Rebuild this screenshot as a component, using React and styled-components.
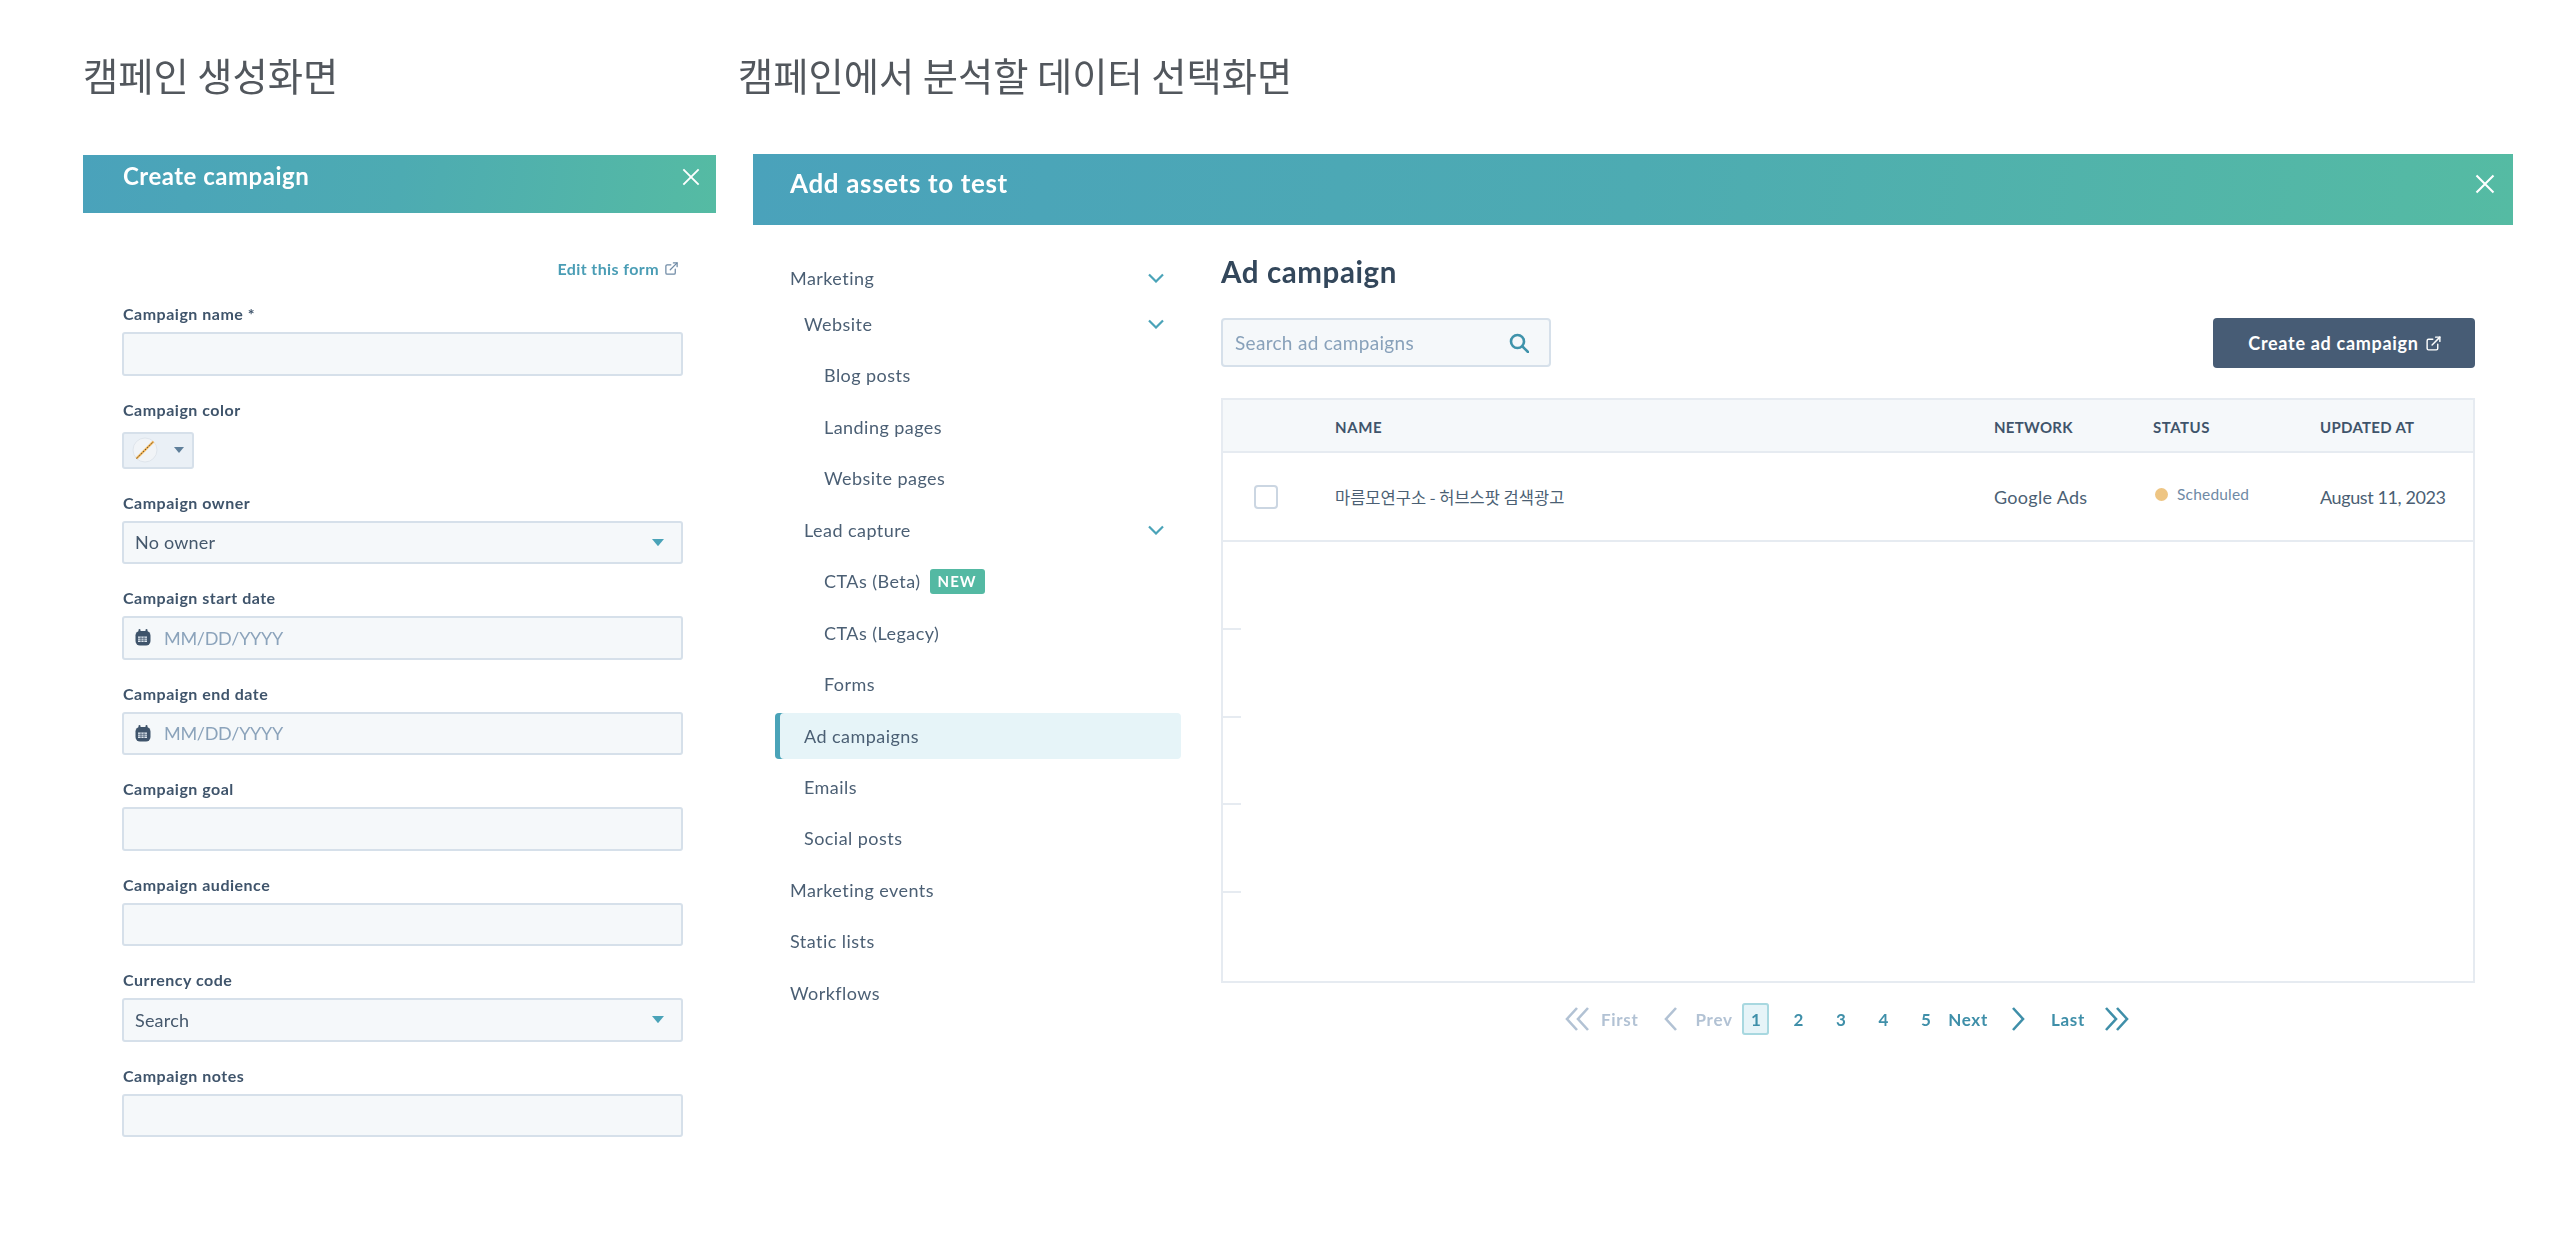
import React from "react";
import styled, { createGlobalStyle } from "styled-components";
import { ExternalLink } from "lucide-react";

const Global = createGlobalStyle`
  html, body { margin: 0; padding: 0; background: #fff; }
  body { font-family: Lato, "Noto Sans CJK KR", sans-serif; color: #33475b; }
  * { box-sizing: border-box; }
`;

const Page = styled.div`
  display: grid;
  grid-template-columns: 633px 1775px;
  column-gap: 22px;
  width: 2560px;
  height: 1233px;
  padding: 50px 0 0 83px;
  overflow: hidden;
  filter: blur(0.4px);
`;
const Column = styled.section`
  display: flex;
  flex-direction: column;
  min-width: 0;
`;
const Heading = styled.h1`
  margin: 0;
  height: ${(p) => p.$h}px;
  font: 400 38.3px/50px "Noto Sans CJK KR", sans-serif;
  color: #52575d;
`;
const Banner = styled.header`
  display: flex;
  justify-content: space-between;
  background: linear-gradient(97deg, #4aa2bb 0%, #4dabb2 50%, #55bba3 100%);
  color: #fff;
  height: ${(p) => p.$h}px;
  padding: ${(p) => p.$pad};
`;
const BannerTitle = styled.h2`
  margin: 0;
  font-weight: 700;
  font-size: ${(p) => p.$size}px;
  line-height: 30px;
  letter-spacing: ${(p) => p.$ls}px;
`;
const CloseButton = styled.span`
  display: block;
  padding-top: ${(p) => p.$top}px;
`;
const CloseIcon = ({ size }) => (
  <svg width={size} height={size} viewBox="0 0 20 20" fill="none" stroke="#fff" strokeWidth="2.1">
    <path d="M1.5 1.5 18.5 18.5M18.5 1.5 1.5 18.5" />
  </svg>
);

const FormBody = styled.div`
  display: flex;
  flex-direction: column;
  padding: 45px 33px 0 39px;
`;
const EditLink = styled.a`
  display: flex;
  align-items: center;
  justify-content: flex-end;
  gap: 5px;
  height: 20px;
  margin-bottom: 27px;
  padding-right: 4px;
  font-size: 16px;
  font-weight: 700;
  letter-spacing: 0.4px;
  color: #4a9db5;
`;
const Field = styled.div`
  display: flex;
  flex-direction: column;
  margin-bottom: 25px;
`;
const Label = styled.label`
  height: 20px;
  margin-bottom: 7px;
  padding-left: 1px;
  font-size: 16px;
  font-weight: 700;
  line-height: 18px;
  letter-spacing: 0.5px;
  color: #3f546b;
`;
const Control = styled.div`
  display: flex;
  align-items: center;
  justify-content: space-between;
  height: 43.5px;
  padding: 0 17px 0 11px;
  background: #f5f8fa;
  border: 2px solid #d6e0ea;
  border-radius: 3px;
  font-size: 18px;
  letter-spacing: 0.2px;
  color: #45586c;
`;
const DateValue = styled.span`
  display: flex;
  align-items: center;
  gap: 13px;
  color: #8ba3bb;
  letter-spacing: -0.3px;
`;
const ColorButton = styled.button`
  display: flex;
  align-items: center;
  gap: 16px;
  width: 72px;
  height: 37px;
  margin-top: 4px;
  padding: 0 0 0 8px;
  background: #eaf0f6;
  border: 2px solid #d6e0ea;
  border-radius: 3px;
`;
const Caret = ({ w = 12, color = "#4aa3b8" }) => (
  <svg width={w} height={w * 0.6} viewBox="0 0 10 6" fill={color}>
    <path d="M0 0h10L5 6z" />
  </svg>
);
const CalendarIcon = () => (
  <svg width="16" height="17" viewBox="0 0 16 17">
    <rect x="0.5" y="2" width="15" height="14.5" rx="4.5" fill="#3f546b" />
    <rect x="3.5" y="0" width="2" height="4" rx="1" fill="#3f546b" />
    <rect x="10.5" y="0" width="2" height="4" rx="1" fill="#3f546b" />
    <path d="M3 7.5h9v5.5H3z" fill="#dfe7ef" />
    <path d="M3 9.3h9M3 11.2h9M6 7.5v5.5M9 7.5v5.5" stroke="#3f546b" strokeWidth="0.7" />
  </svg>
);
const NoColorIcon = () => (
  <svg width="26" height="26" viewBox="0 0 26 26">
    <circle cx="13" cy="13" r="12" fill="#f1f4f7" stroke="#dfe5ec" />
    <path d="M4.5 21.5 21.5 4.5" stroke="#f0b254" strokeWidth="2.4" />
    <path d="M4.5 21.5 21.5 4.5" stroke="#3a3a3a" strokeWidth="0.8" strokeDasharray="1.5 1.5" />
  </svg>
);

const Panel = styled.div`
  display: flex;
  flex-direction: column;
  margin-left: 15px;
  width: 1760px;
`;
const PanelBody = styled.div`
  display: grid;
  grid-template-columns: 406px 1254px;
  column-gap: 40px;
  padding: 27px 0 0 22px;
`;
const Nav = styled.nav`
  display: flex;
  flex-direction: column;
  padding-top: 3px;
`;
const NavRow = styled.div`
  display: flex;
  align-items: center;
  justify-content: space-between;
  height: 46px;
  margin-bottom: ${(p) => (p.$tight ? 0 : 5.45)}px;
  padding: 0 17px 0 ${(p) => [15, 29, 49][p.$level]}px;
  border-radius: 4px;
  font-size: 18px;
  letter-spacing: 0.45px;
  color: #4b5f74;
  background: ${(p) => (p.$active ? "#e6f4f8" : "transparent")};
  box-shadow: ${(p) => (p.$active ? "inset 5px 0 0 #4aa3b8" : "none")};
`;
const NavLabel = styled.span`
  display: flex;
  align-items: center;
  gap: 9px;
`;
const NewBadge = styled.span`
  display: inline-flex;
  align-items: center;
  justify-content: center;
  width: 55px;
  height: 25px;
  border-radius: 3px;
  background: #54b9a3;
  color: #fff;
  font-size: 15px;
  font-weight: 700;
  letter-spacing: 1px;
`;
const Chevron = () => (
  <svg width="16" height="10" viewBox="0 0 16 10" fill="none" stroke="#4aa3b8" strokeWidth="2.2">
    <path d="M1 1.5 8 8.5 15 1.5" />
  </svg>
);

const Main = styled.main`
  display: flex;
  flex-direction: column;
`;
const MainTitle = styled.h3`
  margin: 0 0 26px;
  height: 40px;
  font-size: 29.5px;
  font-weight: 700;
  line-height: 40px;
  letter-spacing: 0.6px;
  color: #33475b;
`;
const Toolbar = styled.div`
  display: flex;
  justify-content: space-between;
  align-items: flex-start;
  margin-bottom: 30px;
`;
const SearchBox = styled.div`
  display: flex;
  align-items: center;
  justify-content: space-between;
  width: 330px;
  height: 49px;
  padding: 0 20px 0 12px;
  background: #f5f8fa;
  border: 2px solid #d6e0ea;
  border-radius: 4px;
  font-size: 19px;
  letter-spacing: 0.3px;
  color: #88a1ba;
`;
const SearchIcon = () => (
  <svg width="20" height="20" viewBox="0 0 20 20" fill="none" stroke="#3f93ab" strokeWidth="2.6">
    <circle cx="8.5" cy="8.5" r="6.5" />
    <path d="M13.5 13.5 19 19" strokeLinecap="round" />
  </svg>
);
const PrimaryButton = styled.button`
  display: flex;
  align-items: center;
  justify-content: center;
  gap: 6px;
  width: 262px;
  height: 50px;
  padding: 0 0 0 2px;
  border: none;
  border-radius: 4px;
  background: #475c75;
  color: #fff;
  font-family: inherit;
  font-size: 18px;
  font-weight: 700;
  letter-spacing: 0.7px;
`;
const Table = styled.div`
  display: flex;
  flex-direction: column;
  height: 585px;
  border: 2px solid #e6ebf1;
`;
const TableRow = styled.div`
  display: grid;
  grid-template-columns: 112px 659px 159px 167px 1fr;
  align-items: center;
  flex: none;
  height: ${(p) => p.$h}px;
  padding-top: ${(p) => (p.$head ? 2 : 0)}px;
  background: ${(p) => (p.$head ? "#f5f8fa" : "#fff")};
  border-bottom: 2px solid #e6ebf1;
`;
const HeadCell = styled.span`
  font-size: 15px;
  font-weight: 700;
  letter-spacing: ${(p) => p.$ls ?? 0.3}px;
  color: #3f546b;
`;
const Cell = styled.span`
  font-size: 18px;
  letter-spacing: ${(p) => p.$ls ?? 0.3}px;
  color: #4b5f74;
`;
const NameCell = styled.span`
  font-family: "Noto Sans CJK KR", sans-serif;
  font-size: 16.5px;
  font-weight: 400;
  color: #4b5f74;
`;
const CheckBox = styled.span`
  display: block;
  width: 24px;
  height: 24px;
  margin-left: 31px;
  background: #fff;
  border: 2px solid #cbd6e2;
  border-radius: 4px;
`;
const Status = styled.span`
  display: flex;
  align-items: center;
  gap: 9px;
  margin-top: -5px;
  font-size: 15.5px;
  letter-spacing: 0.2px;
  color: #6f8aa5;
`;
const Dot = styled.i`
  display: block;
  width: 13px;
  height: 13px;
  margin-left: 2px;
  border-radius: 50%;
  background: #eec583;
`;
const EmptyRow = styled.div`
  flex: 1;
  background: linear-gradient(#e6ebf1, #e6ebf1) left bottom / 18px 2px no-repeat;
  &:last-child { background: none; }
`;
const Pagination = styled.div`
  display: flex;
  align-items: center;
  justify-content: center;
  height: 32px;
  margin-top: 20px;
  padding-right: 2px;
`;
const PageLink = styled.span`
  display: flex;
  align-items: center;
  margin-left: ${(p) => p.$ml || 0}px;
  margin-right: ${(p) => p.$mr || 0}px;
  font-size: 17px;
  font-weight: 700;
  letter-spacing: 0.7px;
  color: ${(p) => (p.$off ? "#b2c2d4" : "#3f8fa9")};
`;
const PageNum = styled.span`
  display: flex;
  align-items: center;
  justify-content: center;
  width: 27px;
  height: 32px;
  margin: 0 7.75px;
  border-radius: 3px;
  font-size: 17px;
  font-weight: 700;
  color: #3f8fa9;
  background: ${(p) => (p.$on ? "#e6f4f8" : "transparent")};
  box-shadow: ${(p) => (p.$on ? "inset 0 0 0 2px #a8d8e0" : "none")};
`;
const Arrow = ({ d, w, color }) => (
  <svg width={w} height="26" viewBox={`0 0 ${w} 26`} fill="none" stroke={color} strokeWidth="2.6">
    <path d={d} />
  </svg>
);

const names = ["Campaign goal", "Campaign audience"];

export default function App() {
  const off = "#b2c2d4";
  const on = "#3f8fa9";
  return (
    <Page>
      <Global />
      <Column>
        <Heading $h={105}>캠페인 생성화면</Heading>
        <Banner $h={58} $pad="6px 16px 0 40px">
          <BannerTitle $size={24} $ls={0.5}>Create campaign</BannerTitle>
          <CloseButton $top={7}><CloseIcon size={18} /></CloseButton>
        </Banner>
        <FormBody>
          <EditLink>Edit this form <ExternalLink size={15} color="#6f8aa5" /></EditLink>
          <Field>
            <Label>Campaign name *</Label>
            <Control />
          </Field>
          <Field>
            <Label>Campaign color</Label>
            <ColorButton><NoColorIcon /><Caret w={10} color="#5f7f9a" /></ColorButton>
          </Field>
          <Field>
            <Label>Campaign owner</Label>
            <Control>No owner<Caret /></Control>
          </Field>
          <Field>
            <Label>Campaign start date</Label>
            <Control><DateValue><CalendarIcon />MM/DD/YYYY</DateValue></Control>
          </Field>
          <Field>
            <Label>Campaign end date</Label>
            <Control><DateValue><CalendarIcon />MM/DD/YYYY</DateValue></Control>
          </Field>
          {names.map((n) => (
            <Field key={n}>
              <Label>{n}</Label>
              <Control />
            </Field>
          ))}
          <Field>
            <Label>Currency code</Label>
            <Control>Search<Caret /></Control>
          </Field>
          <Field>
            <Label>Campaign notes</Label>
            <Control />
          </Field>
        </FormBody>
      </Column>
      <Column>
        <Heading $h={104}>캠페인에서 분석할 데이터 선택화면</Heading>
        <Panel>
          <Banner $h={71} $pad="14px 18px 0 37px">
            <BannerTitle $size={26} $ls={0.65}>Add assets to test</BannerTitle>
            <CloseButton $top={6}><CloseIcon size={20} /></CloseButton>
          </Banner>
          <PanelBody>
            <Nav>
              <NavRow $level={0} $tight><NavLabel>Marketing</NavLabel><Chevron /></NavRow>
              <NavRow $level={1}><NavLabel>Website</NavLabel><Chevron /></NavRow>
              <NavRow $level={2}><NavLabel>Blog posts</NavLabel></NavRow>
              <NavRow $level={2}><NavLabel>Landing pages</NavLabel></NavRow>
              <NavRow $level={2}><NavLabel>Website pages</NavLabel></NavRow>
              <NavRow $level={1}><NavLabel>Lead capture</NavLabel><Chevron /></NavRow>
              <NavRow $level={2}><NavLabel>CTAs (Beta)<NewBadge>NEW</NewBadge></NavLabel></NavRow>
              <NavRow $level={2}><NavLabel>CTAs (Legacy)</NavLabel></NavRow>
              <NavRow $level={2}><NavLabel>Forms</NavLabel></NavRow>
              <NavRow $level={1} $active><NavLabel>Ad campaigns</NavLabel></NavRow>
              <NavRow $level={1}><NavLabel>Emails</NavLabel></NavRow>
              <NavRow $level={1}><NavLabel>Social posts</NavLabel></NavRow>
              <NavRow $level={0}><NavLabel>Marketing events</NavLabel></NavRow>
              <NavRow $level={0}><NavLabel>Static lists</NavLabel></NavRow>
              <NavRow $level={0}><NavLabel>Workflows</NavLabel></NavRow>
            </Nav>
            <Main>
              <MainTitle>Ad campaign</MainTitle>
              <Toolbar>
                <SearchBox>Search ad campaigns<SearchIcon /></SearchBox>
                <PrimaryButton>Create ad campaign <ExternalLink size={17} color="#fff" /></PrimaryButton>
              </Toolbar>
              <Table>
                <TableRow $head $h={53}>
                  <span />
                  <HeadCell $ls={0.6}>NAME</HeadCell>
                  <HeadCell>NETWORK</HeadCell>
                  <HeadCell $ls={0.5}>STATUS</HeadCell>
                  <HeadCell $ls={0.3}>UPDATED AT</HeadCell>
                </TableRow>
                <TableRow $h={89}>
                  <CheckBox />
                  <NameCell>마름모연구소 - 허브스팟 검색광고</NameCell>
                  <Cell>Google Ads</Cell>
                  <Status><Dot />Scheduled</Status>
                  <Cell $ls={-0.4}>August 11, 2023</Cell>
                </TableRow>
                <EmptyRow /><EmptyRow /><EmptyRow /><EmptyRow /><EmptyRow />
              </Table>
              <Pagination>
                <Arrow w={24} color={off} d="M12 2 2 13 12 24M23 2 13 13 23 24" />
                <PageLink $off $ml={12}>First</PageLink>
                <PageLink $ml={25}><Arrow w={13} color={off} d="M12 2 2 13 12 24" /></PageLink>
                <PageLink $off $ml={19} $mr={2}>Prev</PageLink>
                <PageNum $on>1</PageNum>
                <PageNum>2</PageNum>
                <PageNum>3</PageNum>
                <PageNum>4</PageNum>
                <PageNum>5</PageNum>
                <PageLink $ml={1}>Next</PageLink>
                <PageLink $ml={24}><Arrow w={13} color={on} d="M1 2 11 13 1 24" /></PageLink>
                <PageLink $ml={26}>Last</PageLink>
                <PageLink $ml={20}><Arrow w={24} color={on} d="M1 2 11 13 1 24M12 2 22 13 12 24" /></PageLink>
              </Pagination>
            </Main>
          </PanelBody>
        </Panel>
      </Column>
    </Page>
  );
}
